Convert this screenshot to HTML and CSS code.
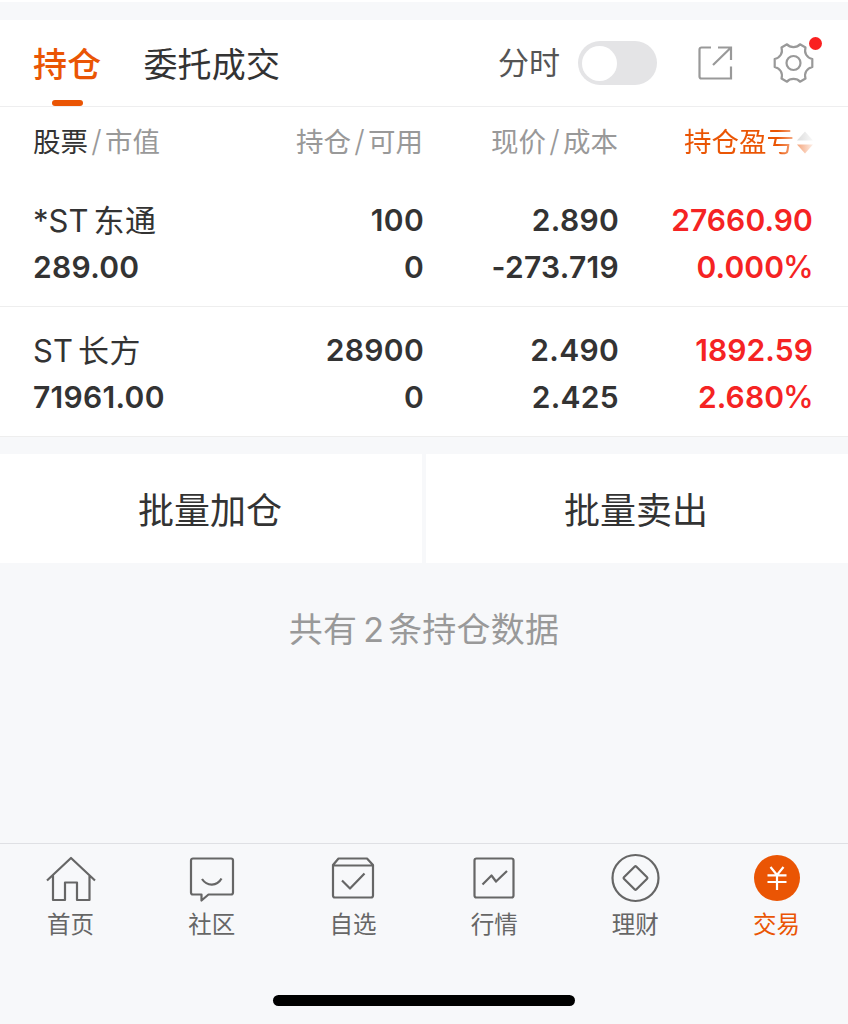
FILE: index.html
```html
<!DOCTYPE html>
<html lang="zh-CN">
<head>
<meta charset="utf-8">
<title>持仓</title>
<link rel="stylesheet" href="styles.css">
</head>
<body>
<main class="screen">
  <header class="toolbar">
    <nav class="tabs">
      <a class="tab tab-active">持仓</a>
      <a class="tab">委托成交</a>
    </nav>
    <span class="chart-label">分时</span>
    <span class="switch"><span class="knob"></span></span>
    <svg class="share" width="36" height="36" viewBox="0 0 36 36" fill="none" stroke="#999" stroke-width="2.200">
      <path d="M14 2.500H4.500a2 2 0 0 0-2 2V31.500a2 2 0 0 0 2 2H34V21.500M21 2.500H34V15M34 2.500L16 20"/>
    </svg>
    <span class="settings">
      <svg width="42" height="42" viewBox="0 0 42 42" fill="none" stroke="#999" stroke-width="2.200" stroke-linejoin="round">
        <path d="M15 2.300C18 6 25 6 28 2.300L33.500 5.500C32 11 34.500 15.500 40.300 17V25C34.500 26.500 32 31 33.500 36.500L28 39.700C25 36 18 36 15 39.700L9.500 36.500C11 31 8.500 26.500 2.700 25V17C8.500 15.500 11 11 9.500 5.500Z"/>
        <circle cx="21.500" cy="21" r="7"/>
      </svg>
      <span class="dot"></span>
    </span>
  </header>

  <section class="holdings">
    <div class="row head">
      <span><b class="strong">股票</b><i class="slash">/</i>市值</span>
      <span>持仓<i class="slash">/</i>可用</span>
      <span>现价<i class="slash">/</i>成本</span>
      <span class="sort"><span class="sort-text">持仓盈亏</span><svg width="18" height="24" viewBox="0 0 18 24">
        <defs>
          <linearGradient id="up"><stop stop-color="#ddd"/><stop offset="1" stop-color="#f8f8f8"/></linearGradient>
          <linearGradient id="down"><stop stop-color="#f5a57c"/><stop offset="1" stop-color="#fdeee6"/></linearGradient>
        </defs>
        <path fill="url(#up)" d="M1 9.500L9 .500l8 9z"/><path fill="url(#down)" d="M1 13.500h16l-8 9z"/>
      </svg></span>
    </div>
    <div class="row stock">
      <div><p class="name">*ST<span class="cjk">东通</span></p><p>289.00</p></div>
      <div><p>100</p><p>0</p></div>
      <div><p>2.890</p><p>-273.719</p></div>
      <div class="gain"><p>27660.90</p><p>0.000<span class="pct">%</span></p></div>
    </div>
    <div class="row stock">
      <div><p class="name">ST<span class="cjk">长方</span></p><p>71961.00</p></div>
      <div><p>28900</p><p>0</p></div>
      <div><p>2.490</p><p>2.425</p></div>
      <div class="gain"><p>1892.59</p><p>2.680<span class="pct">%</span></p></div>
    </div>
  </section>

  <section class="actions">
    <a class="action">批量加仓</a>
    <a class="action">批量卖出</a>
  </section>

  <p class="summary">共有<span class="count">2</span>条持仓数据</p>

  <nav class="tabbar">
    <a class="item">
      <svg class="icon" width="50" height="50" viewBox="0 0 50 50"><path d="M1 26.500L25 4l24 22.500M7 21.500v24.500H19V28.500H31V46H43.500V21.500"/></svg>
      首页
    </a>
    <a class="item">
      <svg class="icon" width="50" height="50" viewBox="0 0 50 50"><path d="M6 4.500H44a2 2 0 0 1 2 2V38.500a2 2 0 0 1-2 2H21.500L14.500 46.500V40.500H6a2 2 0 0 1-2-2V6.500a2 2 0 0 1 2-2zM15 25C20 32.500 30 32.500 34.500 24.500"/></svg>
      社区
    </a>
    <a class="item">
      <svg class="icon" width="50" height="50" viewBox="0 0 50 50"><path d="M5 11L10.500 4.500H39L45 11V41.500a2 2 0 0 1-2 2H7a2 2 0 0 1-2-2zM5 11.500H45M14 26.500l8 8L36.500 19.500"/></svg>
      自选
    </a>
    <a class="item">
      <svg class="icon" width="50" height="50" viewBox="0 0 50 50"><rect x="5.500" y="4.500" width="39" height="39" rx="2"/><path d="M13.500 30.500L22.500 21.500L27 27.500L38 17"/></svg>
      行情
    </a>
    <a class="item">
      <svg class="icon" width="50" height="50" viewBox="0 0 50 50"><circle cx="25.500" cy="24" r="23"/><rect x="16.800" y="15.300" width="17.400" height="17.400" rx="1" transform="rotate(45 25.500 24)"/></svg>
      理财
    </a>
    <a class="item item-active">
      <svg class="icon" width="50" height="50" viewBox="0 0 50 50"><circle class="coin" cx="25" cy="24" r="23"/><path class="yen" d="M18.500 13L25 21L31.500 13M25 21V36M15.500 21.300H34.500M15.500 28H34.500"/></svg>
      交易
    </a>
  </nav>
  <div class="home-indicator"></div>
</main>
</body>
</html>
```

FILE: styles.css
```css
* { box-sizing: border-box; }
body { margin: 0; background: #f7f8fa; color: #333; font-family: Inter, "Noto Sans CJK SC", sans-serif; }
p { margin: 0; }
.screen { display: flex; flex-direction: column; width: 848px; height: 1024px; border-top: 2px solid #fff; padding-top: 18px; }

.toolbar { display: flex; align-items: center; height: 87px; flex: none; padding-left: 33px; background: #fff; border-bottom: 1px solid #eeeeef; }
.tabs { display: flex; gap: 42px; height: 86px; margin-right: auto; font-size: 34px; line-height: 90px; }
.tab { display: flex; flex-direction: column; letter-spacing: .2px; }
.tab-active { color: #ea5504; font-weight: 500; }
.tab-active::after { content: ""; width: 31px; height: 6px; margin-top: -10px; align-self: center; border-radius: 3px; background: #ea5504; }
.chart-label { font-size: 31px; line-height: 40px; padding-bottom: 1px; color: #555; margin-right: 18px; }
.switch { width: 79px; height: 44px; padding: 5px 4px; border-radius: 22px; background: #e4e4e6; margin-right: 40px; }
.knob { display: block; width: 35px; height: 35px; border-radius: 50%; background: #fff; }
.share { margin-right: 39px; }
.settings { position: relative; width: 42px; height: 42px; margin-right: 34px; }
.settings svg { display: block; }
.dot { position: absolute; top: -5px; right: -8px; width: 13px; height: 13px; border-radius: 50%; background: #fa2020; }

.holdings { background: #fff; flex: none; height: 330px; border-bottom: 1px solid #eee; }
.row { display: grid; grid-template-columns: 190px 200px 195px 194px; padding-left: 33px; text-align: right; }
.row > :first-child { text-align: left; }
.head { height: 69px; line-height: 71px; font-size: 27.5px; color: #999; }
.strong { font-weight: 400; color: #333; }
.slash { display: inline-block; font-style: normal; font-weight: 300; font-size: 30px; line-height: 1; width: 17px; text-align: center; }
.sort { display: flex; justify-content: flex-end; align-items: center; color: #ea5504; }
.sort-text { margin-right: 2px; color: transparent; background: linear-gradient(90deg, #ea5504 85%, #f5b08c); background-clip: text; }
.sort svg { margin-right: -2px; }
.stock { height: 130px; padding-top: 21px; font-size: 30px; line-height: 47px; font-weight: 600; letter-spacing: .3px; }
.stock > :not(:first-child) { margin-right: -1px; margin-left: 1px; }
.stock + .stock { height: 131px; padding-top: 20px; border-top: 1px solid #eee; }
.name { font-weight: 400; font-size: 31px; letter-spacing: 0; }
.cjk { margin-left: 5px; letter-spacing: .5px; }
.gain { color: #f52323; letter-spacing: .1px; }
.pct { font-weight: 500; font-size: 31px; line-height: 1; margin-left: -1px; margin-right: -1px; }

.actions { display: grid; grid-template-columns: 422px 422px; gap: 4px; margin-top: 17px; flex: none; }
.action { height: 109px; line-height: 115px; padding-right: 2px; text-align: center; background: #fff; font-size: 36px; }
.summary { margin-top: 42px; text-align: center; font-size: 34px; line-height: 50px; color: #999; letter-spacing: .2px; }
.count { margin: 0 4px 0 6px; }

.tabbar { display: grid; grid-template-columns: repeat(6, 141.200px); margin-top: auto; height: 152px; border-top: 1px solid #dfe0e4; padding-top: 10px; flex: none; }
.item { display: flex; flex-direction: column; align-items: center; font-size: 23.500px; line-height: 42px; color: #666; }
.icon { display: block; fill: none; stroke: #666; stroke-width: 2.200; stroke-linejoin: round; overflow: visible; }
.item-active { color: #ea5504; }
.icon .coin { fill: #ea5504; stroke: none; }
.icon .yen { stroke: #fff; }
.home-indicator { width: 302px; height: 11px; margin: 0 auto 18px; border-radius: 6px; background: #000; flex: none; }
```
